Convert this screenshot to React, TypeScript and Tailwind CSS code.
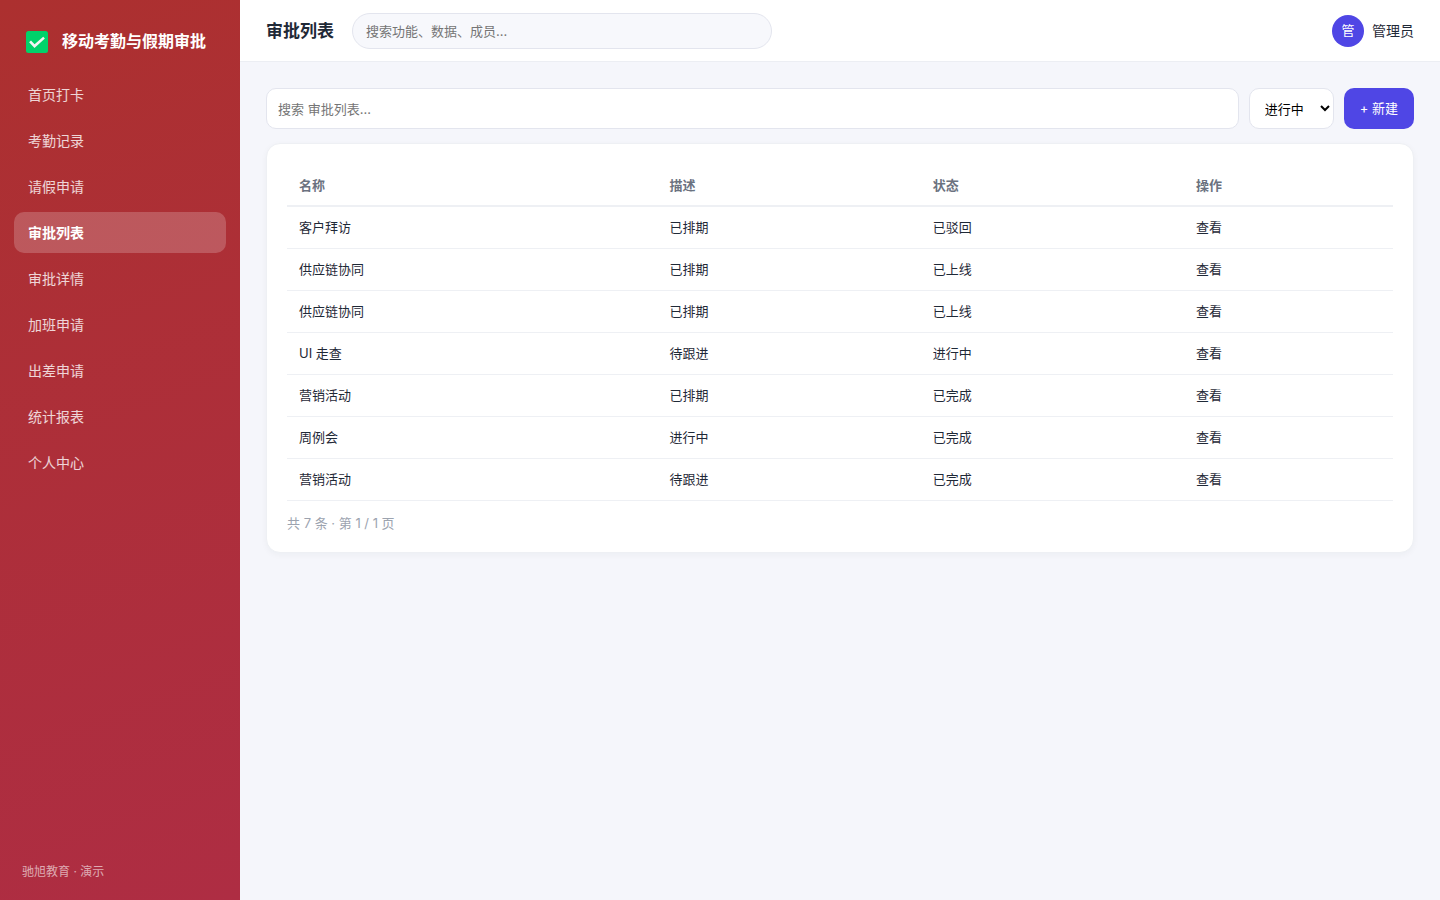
import { useState } from 'react';

const navItems = [
  '首页打卡',
  '考勤记录',
  '请假申请',
  '审批列表',
  '审批详情',
  '加班申请',
  '出差申请',
  '统计报表',
  '个人中心',
];

const rows = [
  { name: '客户拜访', desc: '已排期', status: '已驳回' },
  { name: '供应链协同', desc: '已排期', status: '已上线' },
  { name: '供应链协同', desc: '已排期', status: '已上线' },
  { name: 'UI 走查', desc: '待跟进', status: '进行中' },
  { name: '营销活动', desc: '已排期', status: '已完成' },
  { name: '周例会', desc: '进行中', status: '已完成' },
  { name: '营销活动', desc: '待跟进', status: '已完成' },
];

function LogoMark() {
  return (
    <svg viewBox="0 0 22 22" className="h-[22px] w-[22px] shrink-0" aria-hidden="true">
      <rect width="22" height="22" rx="2.5" fill="#00d26a" />
      <path d="M3.1 11.3L5 9.6l3.6 3.7L17.2 5.7l1.7 1.9L8.5 17z" fill="#f4f4f4" />
    </svg>
  );
}

function Sidebar({ active, onSelect }: { active: string; onSelect: (item: string) => void }) {
  return (
    <aside className="flex w-60 shrink-0 flex-col bg-linear-160 from-[#ac302f] to-[#ae2d43] px-3.5 pt-[21px] pb-4 text-white">
      <div className="mb-[11px] flex h-[42px] items-center gap-3.5 px-3">
        <LogoMark />
        <span className="pb-0.5 text-base leading-6 font-bold whitespace-nowrap">移动考勤与假期审批</span>
      </div>

      <nav className="flex flex-col gap-[5px]">
        {navItems.map((item) => (
          <a
            key={item}
            href="#"
            onClick={() => onSelect(item)}
            className={
              item === active
                ? 'rounded-[10px] bg-white/20 px-3.5 py-2.5 text-sm leading-[21px] font-bold'
                : 'rounded-[10px] px-3.5 py-2.5 text-sm leading-[21px] text-white/80'
            }
          >
            {item}
          </a>
        ))}
      </nav>

      <p className="mt-auto px-2 py-1 text-xs leading-4 text-white/60">驰旭教育 · 演示</p>
    </aside>
  );
}

export default function App() {
  const [active, setActive] = useState('审批列表');
  const [keyword, setKeyword] = useState('');
  const [status, setStatus] = useState('进行中');

  const visibleRows = rows.filter((row) => row.name.includes(keyword));

  return (
    <div className="flex min-h-screen bg-[#f5f6fb] font-['Inter','Noto_Sans_CJK_SC',sans-serif] text-[#1f2937]">
      <Sidebar active={active} onSelect={setActive} />

      <div className="flex min-w-0 flex-1 flex-col">
        {/* Top bar */}
        <header className="flex items-center border-b border-[#eceef3] bg-white px-[26px] pt-[13px] pb-3">
          <h1 className="mr-[18px] text-[17px] leading-6 font-bold">审批列表</h1>
          <input
            type="search"
            aria-label="全局搜索"
            placeholder="搜索功能、数据、成员..."
            className="h-9 w-full max-w-[420px] rounded-full border border-[#e3e5ee] bg-[#f7f8fc] px-[13px] text-[13px] outline-none placeholder:text-[#757575]"
          />
          <div className="ml-auto flex items-center gap-2">
            <span className="flex h-8 w-8 items-center justify-center rounded-full bg-[#4f46e5] text-[13px] text-white">
              管
            </span>
            <span className="text-sm">管理员</span>
          </div>
        </header>

        <main className="p-[26px]">
          {/* Filters */}
          <div className="mb-3.5 flex gap-2.5">
            <input
              type="search"
              aria-label="搜索审批列表"
              placeholder="搜索 审批列表..."
              value={keyword}
              onChange={(e) => setKeyword(e.target.value)}
              className="h-[41px] min-w-0 flex-1 rounded-[10px] border border-[#e3e5ee] bg-white px-[11px] text-[13px] outline-none placeholder:text-[#757575]"
            />
            <select
              aria-label="状态"
              value={status}
              onChange={(e) => setStatus(e.target.value)}
              className="h-[41px] w-[85px] rounded-[10px] border border-[#e3e5ee] bg-white pl-[11px] text-[13px] text-black"
            >
              <option>进行中</option>
              <option>已完成</option>
              <option>已驳回</option>
            </select>
            <button className="h-[41px] rounded-[10px] bg-[#4f46e5] px-4 text-[13px] text-white">
              + 新建
            </button>
          </div>

          {/* Table */}
          <section className="rounded-[14px] border border-[#eef0f4] bg-white p-5 shadow-[0_2px_6px_rgba(31,41,55,0.04)]">
            <table className="w-full border-collapse text-left text-[13px] leading-5">
              <thead>
                <tr className="h-[42px] border-b-2 border-[#eef0f4] text-[#6b7280]">
                  <th className="w-[33.5%] px-3 font-bold">名称</th>
                  <th className="w-[23.8%] px-3 font-bold">描述</th>
                  <th className="w-[23.8%] px-3 font-bold">状态</th>
                  <th className="px-3 font-bold">操作</th>
                </tr>
              </thead>
              <tbody>
                {visibleRows.map((row, i) => (
                  <tr key={i} className="h-[42px] border-b border-[#eef0f4]">
                    <td className="px-3">{row.name}</td>
                    <td className="px-3">{row.desc}</td>
                    <td className="px-3">{row.status}</td>
                    <td className="px-3">
                      <button>查看</button>
                    </td>
                  </tr>
                ))}
              </tbody>
            </table>
            <p className="mt-[13px] text-[13px] leading-[18px] text-[#9ca3af]">共 7 条 · 第 1 / 1 页</p>
          </section>
        </main>
      </div>
    </div>
  );
}
